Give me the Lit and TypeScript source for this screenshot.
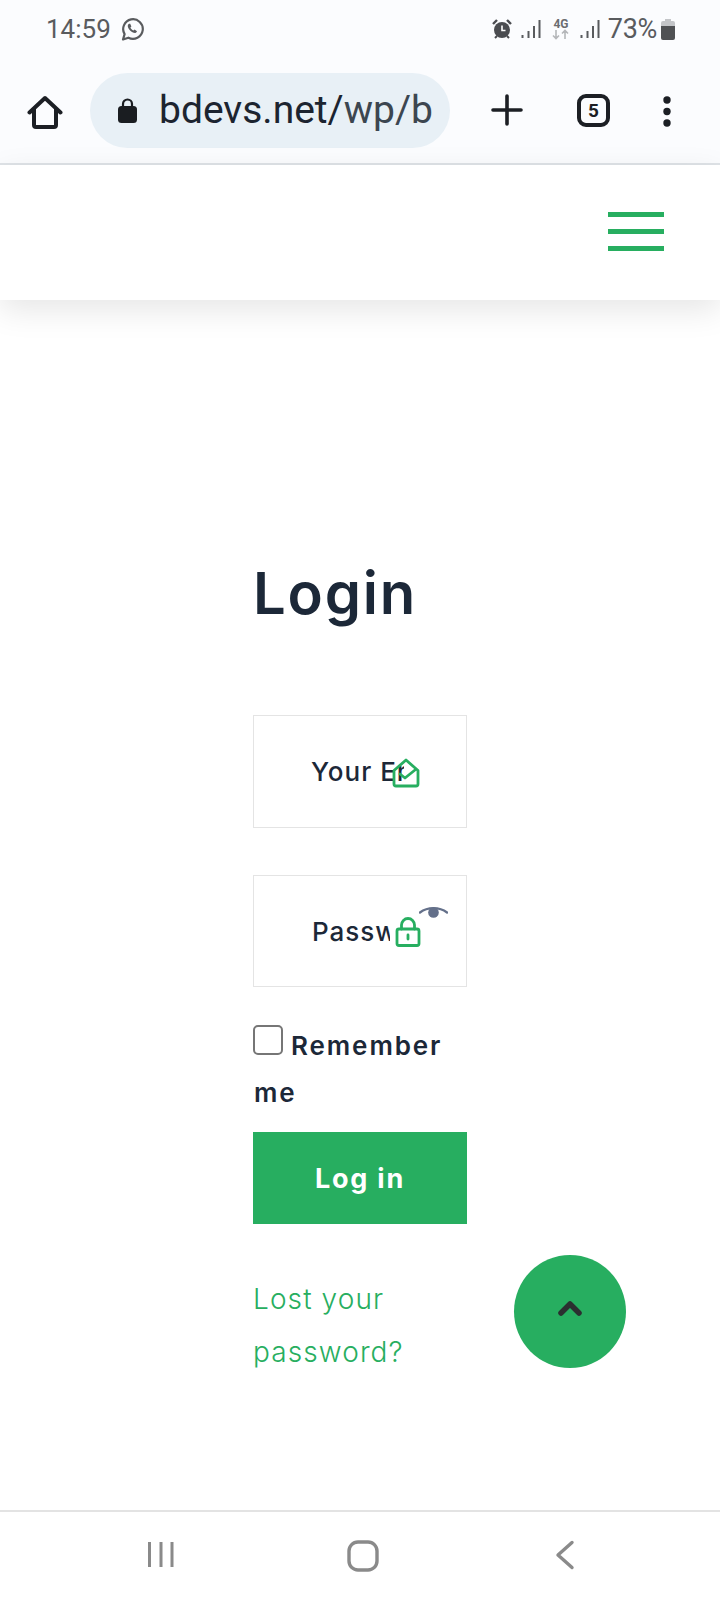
import { LitElement, html, css } from "lit";
import { customElement } from "lit/decorators.js";

@customElement("app-root")
export class AppRoot extends LitElement {
  static styles = css`
    :host { display: block; width: 720px; height: 1600px; background: #fff; font-family: Inter, "Liberation Sans", sans-serif; color: #1c2838; position: relative; overflow: hidden; }
    .page { height: 1600px; display: flex; flex-direction: column; }
    .top { background: #fbfcfe; height: 163px; display: flex; flex-direction: column; }
    .status { height: 62px; display: flex; align-items: center; justify-content: space-between; padding: 0 45px 4px 46px; box-sizing: border-box; font-family: Roboto, sans-serif; font-size: 26px; color: #595b5e; }
    .st-group { display: flex; align-items: center; }
    .time { margin-right: 10px; }
    .st-right svg { display: block; }
    .alarm { margin-right: 9px; }
    .sig { margin-right: 10px; }
    .net { margin-right: 9px; }
    .sig2 { margin-right: 8px; }
    .pct { margin-right: 4px; font-size: 27px; letter-spacing: -0.3px; }
    .toolbar { flex: 1; display: flex; align-items: flex-start; padding-top: 11px; position: relative; }
    .home { margin: 22px 0 0 27px; }
    .pill { margin-left: 27px; width: 360px; height: 75px; border-radius: 38px; background: #e8f0f6; box-sizing: border-box; padding-left: 28px; display: flex; align-items: center; gap: 22px; }
    .lockglyph { flex: none; }
    .url { font-family: Roboto, sans-serif; font-size: 39px; width: 274px; overflow: hidden; white-space: nowrap; color: #1c2430; line-height: 48px; padding-bottom: 2px; }
    .url i { font-style: normal; color: #3c4650; }
    .plus { margin: 21px 0 0 41px; }
    .tabs { margin: 21px 0 0 54px; width: 33px; height: 33px; box-sizing: border-box; border: 4px solid #1c1f24; border-radius: 9px; display: flex; align-items: center; justify-content: center; font-family: Roboto, sans-serif; font-weight: 700; font-size: 19px; color: #1c1f24; }
    .dots { margin: 23px 0 0 51px; }
    .divider { height: 2px; background: #dfe3e7; }
    .header { height: 135px; background: #fff; box-shadow: 0 10px 30px rgba(0,0,0,.1); display: flex; justify-content: flex-end; align-items: flex-start; padding: 47px 56px 0 0; box-sizing: border-box; position: relative; }
    .burger { display: flex; flex-direction: column; gap: 12px; width: 56px; }
    .burger span { height: 5px; background: #27ae60; }
    .main { flex: 1; padding: 258px 0 0 253px; }
    .form { width: 214px; display: flex; flex-direction: column; align-items: stretch; }
    h1 { margin: 0 0 87px; font-size: 58px; line-height: 70px; font-weight: 600; letter-spacing: 1.8px; }
    .field { position: relative; height: 113px; border: 1px solid #e4e4e4; box-sizing: border-box; margin-bottom: 47px; display: flex; align-items: center; font-size: 26px; font-weight: 500; letter-spacing: 1px; }
    .field.pw { height: 112px; margin-bottom: 38px; }
    .ph { display: block; margin-left: 57px; overflow: hidden; white-space: nowrap; line-height: 34px; padding-top: 1px; }
    .email .ph { width: 93px; }
    .pw .ph { width: 78px; margin-left: 58px; }
    .ico { position: absolute; display: block; }
    .email .ico { left: 138px; top: 42px; }
    .pw .lock { left: 141px; top: 41px; }
    .pw .eye { left: 165px; top: 30px; }
    .remember { font-size: 26px; font-weight: 600; line-height: 47px; letter-spacing: 1.9px; margin-top: -3px; margin-bottom: 16px; }
    .check { display: inline-block; width: 30px; height: 30px; box-sizing: border-box; border: 2px solid #767676; border-radius: 5px; margin-right: 8px; vertical-align: 0; background: #fff; }
    .me { display: block; margin-left: 1px; }
    .btn { height: 92px; background: #27ae60; color: #fff; font-weight: 700; font-size: 27px; letter-spacing: 1.8px; display: flex; align-items: center; justify-content: center; margin-bottom: 49px; }
    .lost { color: #27ae60; font-weight: 300; font-size: 28px; line-height: 53px; letter-spacing: 1.1px; }
    .totop { position: absolute; left: 514px; top: 1255px; width: 112px; height: 113px; border-radius: 50%; background: #27ae60; display: flex; align-items: center; justify-content: center; padding-bottom: 8px; box-sizing: border-box; }
    .nav { height: 90px; border-top: 2px solid #e3e3e3; background: #fff; position: relative; display: flex; box-sizing: border-box; }
    .nav svg { display: block; margin-top: 28px; }
    .nav .n1 { margin-left: 146px; }
    .nav .n2 { margin-left: 173px; }
    .nav .n3 { margin-left: 176px; }
  `;

  render() {
    return html`
      <div class="page">
        <div class="top">
          <div class="status">
            <div class="st-group">
              <span class="time">14:59</span>
              <svg width="23" height="24" viewBox="0 0 23 24" fill="none">
                <path d="M2 22.5l1.6-5.4A9.8 9.8 0 1 1 7.4 20.7z" stroke="#595b5e" stroke-width="2.2" stroke-linejoin="round"/>
                <path d="M8 6.8c-1.4.8-1.6 2.6-.6 4.4 1.2 2.2 3 3.8 5.2 4.6 1.6.5 3-.2 3.4-1.6l-2.4-1.6-1.2 1c-1.4-.6-2.4-1.6-3-3l1-1.2-1.2-2.6z" fill="#595b5e"/>
              </svg>
            </div>
            <div class="st-group st-right">
              <svg class="alarm" width="20" height="20" viewBox="0 0 20 20">
                <circle cx="10" cy="11" r="8" fill="#4a4c50"/>
                <path d="M1 5l4-4M19 5l-4-4" stroke="#4a4c50" stroke-width="2.4"/>
                <path d="M3 19l2-2M17 19l-2-2" stroke="#4a4c50" stroke-width="2"/>
                <path d="M10 6.5v5h3.5" stroke="#fff" stroke-width="1.6" fill="none"/>
              </svg>
              <svg class="sig" width="20" height="20" viewBox="0 0 20 20">
                <path d="M1.500 16v3M7.500 12v7M13 7v12M18.500 1v18" stroke="#595b5e" stroke-width="2" fill="none"/>
              </svg>
              <svg class="net" width="20" height="22" viewBox="0 0 20 22">
                <text x="10" y="10" text-anchor="middle" font-family="Roboto, sans-serif" font-weight="700" font-size="12" fill="#6b6d70">4G</text>
                <path d="M5 12v8M2 17.500l3 3 3-3M14 21v-8M11 15.500l3-3 3 3" stroke="#b5b7ba" stroke-width="1.600" fill="none"/>
              </svg>
              <svg class="sig2" width="20" height="20" viewBox="0 0 20 20">
                <path d="M1.500 16v3M7.500 12v7M13 7v12M18.500 1v18" stroke="#595b5e" stroke-width="2" fill="none"/>
              </svg>
              <span class="pct">73%</span>
              <svg width="14" height="21" viewBox="0 0 14 21">
                <path d="M4 0h6v2h2a2 2 0 0 1 2 2v3H0V4a2 2 0 0 1 2-2h2z" fill="#c3c5c8"/>
                <path d="M0 7h14v12a2 2 0 0 1-2 2H2a2 2 0 0 1-2-2z" fill="#4f5154"/>
              </svg>
            </div>
          </div>
          <div class="toolbar">
            <svg class="home" width="36" height="35" viewBox="0 0 36 35" fill="none">
              <path d="M2.500 17.500L18 3l15.500 14.500M7 14v16a2 2 0 0 0 2 2h18a2 2 0 0 0 2-2V14" stroke="#1c1f24" stroke-width="4" stroke-linecap="round" stroke-linejoin="round"/>
            </svg>
            <div class="pill">
              <svg class="lockglyph" width="19" height="25" viewBox="0 0 19 25" fill="none">
                <path d="M5 9V6a4.500 4.500 0 0 1 9 0v3" stroke="#1a1d21" stroke-width="2.200"/>
                <rect x="0" y="8" width="19" height="17" rx="3.500" fill="#1a1d21"/>
              </svg>
              <div class="url">bdevs.net/<i>wp/b</i></div>
            </div>
            <svg class="plus" width="32" height="32" viewBox="0 0 32 32"><path d="M16 2v28M2 16h28" stroke="#1c1f24" stroke-width="3.600" stroke-linecap="round"/></svg>
            <div class="tabs">5</div>
            <svg class="dots" width="12" height="32" viewBox="0 0 12 32" fill="#1c1f24"><circle cx="6" cy="4" r="3.700"/><circle cx="6" cy="15.500" r="3.700"/><circle cx="6" cy="27" r="3.700"/></svg>
          </div>
        </div>
        <div class="divider"></div>
        <div class="header">
          <div class="burger"><span></span><span></span><span></span></div>
        </div>
        <div class="main">
          <div class="form">
            <h1>Login</h1>
            <div class="field email">
              <span class="ph">Your Email</span>
              <svg class="ico" width="30" height="30" viewBox="0 0 30 30" fill="none" stroke="#27ae60" stroke-width="2.800" stroke-linejoin="round" stroke-linecap="round">
                <path d="M2 12.500L14 2l12 10.500V26a2 2 0 0 1-2 2H4a2 2 0 0 1-2-2z"/>
                <path d="M8 16l5 4 10-8"/>
              </svg>
            </div>
            <div class="field pw">
              <span class="ph">Password</span>
              <svg class="ico lock" width="26" height="30" viewBox="0 0 26 30" fill="none" stroke="#27ae60" stroke-width="2.800" stroke-linejoin="round" stroke-linecap="round">
                <rect x="2" y="12" width="22" height="16.500" rx="2"/>
                <path d="M6.500 12V8a6.500 6.500 0 0 1 13 0v4"/>
                <path d="M13 18v4"/>
              </svg>
              <svg class="ico eye" width="29" height="14" viewBox="0 0 30 14" fill="none">
                <path d="M1 6.500C9 .5 21 .5 29 6.500" stroke="#64708a" stroke-width="2.400" stroke-linecap="round"/>
                <circle cx="15" cy="6.500" r="5.500" fill="#64708a"/>
              </svg>
            </div>
            <div class="remember"><span class="check"></span>Remember <span class="me">me</span></div>
            <div class="btn">Log in</div>
            <div class="lost">Lost your<br />password?</div>
          </div>
        </div>
        <div class="nav">
          <svg class="n1" width="28" height="30" viewBox="0 0 28 30"><path d="M3.500 2v25M15 2v25M26 2v25" stroke="#8a8a8a" stroke-width="3"/></svg>
          <svg class="n2" width="32" height="32" viewBox="0 0 32 32"><rect x="2" y="2" width="28" height="28" rx="9" fill="none" stroke="#8a8a8a" stroke-width="3.400"/></svg>
          <svg class="n3" width="20" height="30" viewBox="0 0 20 30"><path d="M17 2.500L3 15l14 12.500" fill="none" stroke="#8a8a8a" stroke-width="3.400" stroke-linecap="round" stroke-linejoin="round"/></svg>
        </div>
      </div>
      <div class="totop">
        <svg width="26" height="18" viewBox="0 0 26 18"><path d="M4 14l9-9 9 9" fill="none" stroke="#2b2f30" stroke-width="5.500" stroke-linecap="round" stroke-linejoin="round"/></svg>
      </div>
    `;
  }
}
